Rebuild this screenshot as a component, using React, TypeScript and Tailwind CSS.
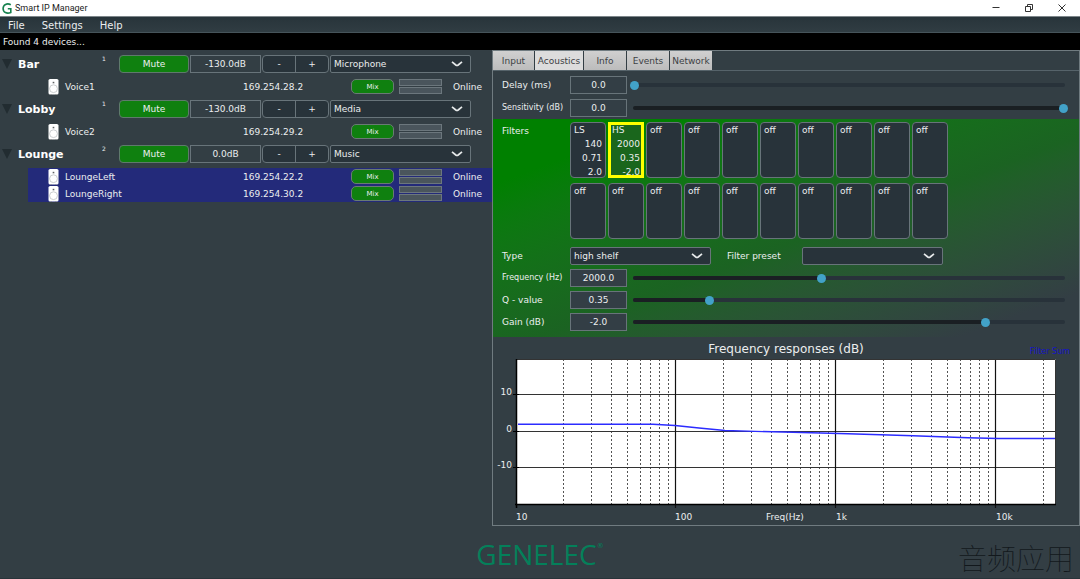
import { useState } from 'react';
import { cx } from 'class-variance-authority';

type Device = { name: string; ip: string; selected?: boolean };
type Zone = { name: string; level: string; source: string; devices: Device[] };

const zones: Zone[] = [
  { name: 'Bar', level: '-130.0dB', source: 'Microphone', devices: [{ name: 'Voice1', ip: '169.254.28.2' }] },
  { name: 'Lobby', level: '-130.0dB', source: 'Media', devices: [{ name: 'Voice2', ip: '169.254.29.2' }] },
  {
    name: 'Lounge',
    level: '0.0dB',
    source: 'Music',
    devices: [
      { name: 'LoungeLeft', ip: '169.254.22.2', selected: true },
      { name: 'LoungeRight', ip: '169.254.30.2', selected: true },
    ],
  },
];

const tabs = [
  { name: 'Input', width: 'w-[41px]' },
  { name: 'Acoustics', width: 'w-12' },
  { name: 'Info', width: 'w-[42px]' },
  { name: 'Events', width: 'w-[42px]' },
  { name: 'Network', width: 'w-[42px]' },
];

const filters = [
  ['LS', '140', '0.71', '2.0'],
  ['HS', '2000', '0.35', '-2.0'],
  ...Array.from({ length: 18 }, () => ['off']),
];

// Frequency response plot
const DECADE = 160;
const PLOT = { left: 23, right: 563, top: 22, bottom: 167 };
const freqX = (hz: number) => PLOT.left + Math.log10(hz / 10) * DECADE;
const minorLines = [10, 100, 1000, 10000]
  .flatMap((d) => [2, 3, 4, 5, 6, 7, 8, 9].map((m) => d * m))
  .filter((hz) => freqX(hz) < PLOT.right);

function Chevron() {
  return (
    <svg viewBox="0 0 12 6" className="w-3 h-[6px] fill-none stroke-[#e6e9ea] pointer-events-none">
      <path d="M1 0.8 L4.8 4 Q6 4.9 7.2 4 L11 0.8" strokeWidth="1.7" />
    </svg>
  );
}

function Select({ label, options, className }: { label: string; options: string[]; className?: string }) {
  return (
    <div className={cx('grid items-center', className)}>
      <select
        aria-label={label}
        className="col-start-1 row-start-1 appearance-none w-full h-[18px] pl-[3px] pr-6 rounded-xs border border-[#68747a] bg-[#28333a] text-[9px] leading-4 text-[#eceeef]"
      >
        {options.map((o) => (
          <option key={o}>{o}</option>
        ))}
      </select>
      <div className="col-start-1 row-start-1 justify-self-end pr-2 pointer-events-none">
        <Chevron />
      </div>
    </div>
  );
}

function SpeakerIcon() {
  return (
    <svg viewBox="0 0 11 16" className="w-[11px] h-4 shrink-0">
      <rect x="0.5" y="0" width="10" height="15.5" rx="1.6" fill="#fff" />
      <circle cx="5.5" cy="3.6" r="1.2" fill="#b5b9bb" />
      <circle cx="5.5" cy="3.6" r="0.5" fill="#444" />
      <circle cx="5.5" cy="9.7" r="3.9" fill="none" stroke="#b5b9bb" strokeWidth="0.7" />
      <path d="M2.5 15.6h1.5M7 15.6h1.5" stroke="#888" strokeWidth="0.6" />
    </svg>
  );
}

function DeviceRow({ device }: { device: Device }) {
  return (
    <li className={cx('ml-7 h-[17px] flex items-center pl-5', device.selected && 'bg-[#232a7a]')}>
      <SpeakerIcon />
      <span className="flex-1 pl-[6px]">{device.name}</span>
      <span className="w-[108px]">{device.ip}</span>
      <button className="w-[43px] h-[15px] rounded-[5px] border border-[#6a7a75] bg-[#0f800f] text-[7px] leading-3">Mix</button>
      <div className="ml-[5px] w-[43px] flex flex-col gap-px">
        <div className="h-[7px] border border-[#6c777d] bg-[#4a555c]" />
        <div className="h-[7px] border border-[#6c777d] bg-[#4a555c]" />
      </div>
      <span className="ml-[11px] w-[39px]">Online</span>
    </li>
  );
}

function ZoneGroup({ zone }: { zone: Zone }) {
  return (
    <section>
      <div className="h-7 flex items-center pl-[2px] pr-[21px]">
        <button aria-label={`Collapse ${zone.name}`}>
          <svg viewBox="0 0 10 10" className="w-[10px] h-[10px] fill-[#222c31]">
            <path d="M0 0h10L5 10z" />
          </svg>
        </button>
        <h2 className="flex-1 pl-[6px] pt-px text-[11px] leading-4 font-bold text-white">{zone.name}</h2>
        <span className="w-[17px] self-start pt-1 text-[6px] leading-[10px]">{zone.devices.length}</span>
        <button className="w-[70px] h-[18px] rounded-sm border border-[#5f7a6c] bg-[#0f800f] leading-4">Mute</button>
        <input
          aria-label={`${zone.name} level`}
          defaultValue={zone.level}
          className="ml-px w-[71px] h-[18px] border border-[#68747a] text-center"
        />
        <div className="ml-px mr-px w-[67px] h-[18px] flex rounded-sm border border-[#68747a] bg-[#28333a]">
          <button aria-label="Volume down" className="flex-1 border-r border-[#68747a] leading-4">-</button>
          <button aria-label="Volume up" className="flex-1 leading-4">+</button>
        </div>
        <Select label={`${zone.name} source`} options={[zone.source]} className="w-[141px]" />
      </div>
      <ul>
        {zone.devices.map((d) => (
          <DeviceRow key={d.name} device={d} />
        ))}
      </ul>
    </section>
  );
}

function SliderRow({ id, label, value, position }: { id: string; label: string; value: string; position: number }) {
  const [pos, setPos] = useState(position);

  return (
    <div className="flex items-center h-[18px]">
      <label htmlFor={id} className={cx('w-[68px] shrink-0 whitespace-nowrap', label.length > 12 && 'text-[8px]')}>
        {label}
      </label>
      <input
        id={id}
        defaultValue={value}
        className="w-[57px] h-[18px] border border-[#68747a] bg-[#333e45] text-center"
      />
      <div className="flex-1 ml-[3px] grid items-center">
        <div className="col-start-1 row-start-1 mx-[3px] h-1 rounded-full bg-[#28323a] overflow-hidden">
          <div className="h-full bg-[#1a1f23]" style={{ width: `${pos / 10}%` }} />
        </div>
        <input
          type="range"
          aria-label={label}
          min={0}
          max={1000}
          value={pos}
          onChange={(e) => setPos(Number(e.target.value))}
          className="col-start-1 row-start-1 w-full h-[9px] appearance-none bg-transparent [&::-webkit-slider-thumb]:appearance-none [&::-webkit-slider-thumb]:size-[9px] [&::-webkit-slider-thumb]:rounded-full [&::-webkit-slider-thumb]:bg-[#42a2c8]"
        />
      </div>
    </div>
  );
}

function FilterCell({ lines, selected, onSelect }: { lines: string[]; selected: boolean; onSelect: () => void }) {
  return (
    <button
      onClick={onSelect}
      className={cx(
        'h-14 flex flex-col leading-[14px]',
        selected
          ? 'border-[3px] border-[#ffff00] bg-[#1a661c] px-px'
          : 'rounded-sm border border-[#68747a] bg-[#28333a] px-[3px]'
      )}
    >
      {lines.map((line, i) => (
        <span key={i} className={cx(i === 0 ? 'text-left' : 'text-right', selected && i === 0 && '-mt-[2px]')}>
          {line}
        </span>
      ))}
    </button>
  );
}

function ResponseChart() {
  return (
    <svg viewBox="0 0 586 188" className="block w-full text-[9px] fill-[#eceeef]">
      <text x="293" y="16" textAnchor="middle" className="text-[12px]">Frequency responses (dB)</text>
      <text x="577" y="17" textAnchor="end" className="text-[8px] fill-[#1414c8]">Filter Sum</text>

      <rect x={PLOT.left} y={PLOT.top} width={PLOT.right - PLOT.left} height={PLOT.bottom - PLOT.top} fill="#fff" />
      {minorLines.map((hz) => (
        <line
          key={hz}
          x1={Math.round(freqX(hz)) - 0.5}
          x2={Math.round(freqX(hz)) - 0.5}
          y1={PLOT.top}
          y2={PLOT.bottom}
          stroke="#555"
          strokeDasharray="2 2"
        />
      ))}
      {[57.5, 94.5, 130.5].map((y) => (
        <line key={y} x1={PLOT.left - 3} x2={PLOT.right} y1={y} y2={y} stroke="#333" />
      ))}
      {[57.5, 94.5, 130.5].map((y) => (
        <line key={y} x1={PLOT.left - 3} x2={PLOT.left + 3} y1={y} y2={y} stroke="#000" />
      ))}
      {[100, 1000, 10000].map((hz) => (
        <line key={hz} x1={freqX(hz) - 0.5} x2={freqX(hz) - 0.5} y1={PLOT.top} y2={PLOT.bottom + 4} stroke="#111" strokeWidth="1.2" />
      ))}
      <path d="M23 22.5H562.5V167" fill="none" stroke="#333" />
      <path d="M23.5 22V171M22 167.5H563" fill="none" stroke="#000" strokeWidth="1.5" />
      <path
        d="M25 87.2H160L182 88.5L206 91L232 93.5L262 94.4L300 95.3L355 96.8L420 98.8L475 100.7L505 101.5H562"
        fill="none"
        stroke="#2c2cff"
        strokeWidth="1.4"
      />

      <text x="19" y="58" textAnchor="end">10</text>
      <text x="19" y="95" textAnchor="end">0</text>
      <text x="19" y="131" textAnchor="end">-10</text>
      <text x="23" y="183">10</text>
      <text x="182" y="183">100</text>
      <text x="343" y="183">1k</text>
      <text x="503" y="183">10k</text>
      <text x="273" y="183">Freq(Hz)</text>
    </svg>
  );
}

function TitleBar() {
  return (
    <header className="h-4 flex items-center bg-white text-black">
      <svg viewBox="0 0 10 11" className="ml-[2px] w-[10px] h-[11px] fill-none stroke-[#17824f]">
        <path d="M8.8 1.7C5 -0.2 1.1 1.6 1.1 5.5C1.1 9.3 4.8 11.2 8.8 9.4V5.8H5.8" strokeWidth="1.6" />
      </svg>
      <h1 className="flex-1 pl-[3px] font-[Roboto,sans-serif] text-[9px] leading-4 text-[#222]">Smart IP Manager</h1>
      <div className="flex gap-[25px] pr-[14px]">
        <button aria-label="Minimize">
          <svg viewBox="0 0 8 8" className="size-2 fill-none stroke-[#333]"><path d="M0.5 3.5h7" /></svg>
        </button>
        <button aria-label="Restore">
          <svg viewBox="0 0 8 8" className="size-2 fill-none stroke-[#333]">
            <path d="M0.5 2.5h5v5h-5zM2.5 2.5v-2h5v5h-2" />
          </svg>
        </button>
        <button aria-label="Close">
          <svg viewBox="0 0 8 8" className="size-2 fill-none stroke-[#333]"><path d="M0.5 0.5l7 7M7.5 0.5l-7 7" /></svg>
        </button>
      </div>
    </header>
  );
}

export default function App() {
  const [activeTab, setActiveTab] = useState('Acoustics');
  const [activeFilter, setActiveFilter] = useState(1);

  return (
    <div className="min-h-screen flex flex-col bg-[#333e44] font-['DejaVu_Sans',Verdana,'Noto_Sans_CJK_SC',sans-serif] text-[9px] leading-3 text-[#eceeef]">
      <TitleBar />

      {/* Menu */}
      <nav className="h-[17px] flex items-center gap-[17px] px-2 pt-[2px] border-y border-t-[#7d868a] border-b-[#46545a] bg-linear-to-b from-[#28343a] to-[#303d43] text-[10px]">
        <button>File</button>
        <button>Settings</button>
        <button>Help</button>
      </nav>
      <p className="h-[17px] px-[3px] bg-black leading-[18px]">Found 4 devices...</p>

      <main className="grid grid-cols-[41fr_49fr] items-start">
        {/* Zones */}
        <div>
          {zones.map((z) => (
            <ZoneGroup key={z.name} zone={z} />
          ))}
        </div>

        {/* Device settings */}
        <div className="border border-[#707b80]">
          <div role="tablist" className="h-5 flex gap-px border-b border-[#56636a]">
            {tabs.map((t) => (
              <button
                key={t.name}
                role="tab"
                aria-selected={t.name === activeTab}
                onClick={() => setActiveTab(t.name)}
                className={cx(
                  'text-[#3c4144]',
                  t.width,
                  t.name === activeTab ? 'bg-[#dcdcdc]' : 'bg-linear-to-b from-[#d0d0d0] to-[#bcbcbc]'
                )}
              >
                {t.name}
              </button>
            ))}
          </div>

          <div className="flex flex-col gap-[5px] pl-[9px] pr-[11px] pt-[5px] pb-[2px]">
            <SliderRow id="delay" label="Delay (ms)" value="0.0" position={0} />
            <SliderRow id="sensitivity" label="Sensitivity (dB)" value="0.0" position={1000} />
          </div>

          <div className="flex flex-col gap-1 pl-[9px] pr-[11px] pt-[3px] pb-[6px] bg-linear-to-br from-[#008000] from-15% via-[#1b6322] via-54% to-[#333e44] to-90%">
            <div className="flex">
              <span className="w-[68px] shrink-0 pt-[3px]">Filters</span>
              <div className="grid grid-cols-[repeat(10,36px)] gap-x-[2px] gap-y-[5px]">
                {filters.map((lines, i) => (
                  <FilterCell key={i} lines={lines} selected={i === activeFilter} onSelect={() => setActiveFilter(i)} />
                ))}
              </div>
            </div>
            <div className="flex items-center pt-1">
              <span className="w-[68px] shrink-0">Type</span>
              <Select label="Type" options={['high shelf']} className="w-[141px]" />
              <span className="ml-4 w-[75px]">Filter preset</span>
              <Select label="Filter preset" options={['']} className="w-[141px]" />
            </div>
            <SliderRow id="frequency" label="Frequency (Hz)" value="2000.0" position={436} />
            <SliderRow id="q" label="Q - value" value="0.35" position={175} />
            <SliderRow id="gain" label="Gain (dB)" value="-2.0" position={819} />
          </div>

          <ResponseChart />
        </div>
      </main>

      <footer className="flex-1 grid grid-cols-3 items-center border-b border-[#29343a]">
        <div className="col-start-2 justify-self-center pt-1 flex items-start text-[#04805a]">
          <span className="font-['Open_Sans',sans-serif] font-medium text-[28px] leading-8">GENELEC</span>
          <span className="pt-1 text-[7px] leading-2">®</span>
        </div>
        <span className="justify-self-end self-end pr-[6px] font-['Noto_Sans_CJK_SC',sans-serif] font-thin text-[29px] leading-[42px] text-[#12181c]">
          音频应用
        </span>
      </footer>
    </div>
  );
}
